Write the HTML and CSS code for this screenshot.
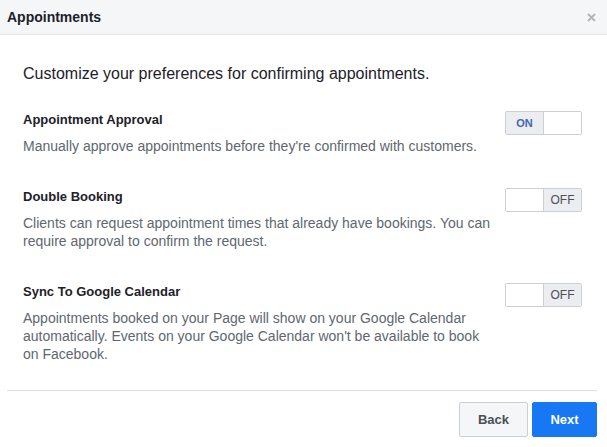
FILE: index.html
```html
<!DOCTYPE html>
<html>
<head>
<meta charset="utf-8">
<link rel="stylesheet" href="styles.css">
</head>
<body>
<div class="dialog">
  <div class="header">
    <span class="title">Appointments</span>
    <svg class="close" width="9" height="9" viewBox="0 0 9 9"><path d="M1 1L8 8M8 1L1 8" stroke="#b0b4bb" stroke-width="1.8"/></svg>
  </div>
  <div class="body">
    <p class="intro">Customize your preferences for confirming appointments.</p>
    <div class="setting">
      <div class="text">
        <div class="name">Appointment Approval</div>
        <div class="desc">Manually approve appointments before they're confirmed with customers.</div>
      </div>
      <div class="toggle on"><span class="lbl">ON</span><span class="blank"></span></div>
    </div>
    <div class="setting">
      <div class="text">
        <div class="name">Double Booking</div>
        <div class="desc">Clients can request appointment times that already have bookings. You can require approval to confirm the request.</div>
      </div>
      <div class="toggle off"><span class="blank"></span><span class="lbl">OFF</span></div>
    </div>
    <div class="setting">
      <div class="text">
        <div class="name">Sync To Google Calendar</div>
        <div class="desc">Appointments booked on your Page will show on your Google Calendar automatically. Events on your Google Calendar won't be available to book on Facebook.</div>
      </div>
      <div class="toggle off"><span class="blank"></span><span class="lbl">OFF</span></div>
    </div>
  </div>
  <div class="footer">
    <button class="btn back">Back</button>
    <button class="btn next">Next</button>
  </div>
</div>
</body>
</html>
```
FILE: styles.css
```css
* { box-sizing: border-box; }
html, body { margin: 0; padding: 0; background: #fff; }
body { font-family: "Liberation Sans", Arial, sans-serif; color: #1d2129; width: 607px; height: 447px; overflow: hidden; }
.dialog { width: 607px; }
.header {
  height: 35px;
  background: #f5f6f7;
  border-bottom: 1px solid #e5e5e5;
  display: flex;
  align-items: center;
  justify-content: space-between;
  padding: 0 11px 0 7px;
}
.title { font-weight: bold; font-size: 14px; color: #1d2129; }
.close { display: block; }
.body { padding: 29px 25px 0 23px; }
.intro { margin: 0 0 28px; font-size: 16px; line-height: 20px; color: #1d2129; }
.setting { display: flex; align-items: flex-start; margin-bottom: 34px; }
.setting:last-child { margin-bottom: 0; }
.text { width: 471px; flex-shrink: 0; }
.name { font-weight: bold; font-size: 13px; line-height: 16px; color: #1d2129; margin-bottom: 9px; }
.desc { font-size: 14px; line-height: 18px; color: #606770; }
.toggle {
  margin-top: -1px;
  margin-left: 11px;
  flex-shrink: 0;
  width: 77px;
  height: 24px;
  border: 1px solid #ccd0d5;
  border-radius: 2px;
  display: flex;
  overflow: hidden;
}
.toggle .lbl {
  width: 38px;
  background: #ebedf0;
  display: flex;
  align-items: center;
  justify-content: center;
  font-size: 11px;
  font-weight: bold;
}
.toggle .blank { flex: 1; background: #fff; }
.toggle.on .lbl { color: #4267b2; border-right: 1px solid #ccd0d5; }
.toggle.off .lbl { color: #4b4f56; font-weight: normal; font-size: 12px; border-left: 1px solid #ccd0d5; }
.footer {
  margin: 27px 10px 0 7px;
  border-top: 1px solid #dddfe2;
  padding-top: 11px;
  display: flex;
  justify-content: flex-end;
  gap: 4px;
}
.btn {
  height: 35px;
  font-family: "Liberation Sans", Arial, sans-serif;
  font-size: 13px;
  font-weight: bold;
  border-radius: 2px;
  padding: 0;
}
.back { width: 69px; background: #f5f6f7; border: 1px solid #ccd0d5; color: #4b4f56; }
.next { width: 65px; background: #1877f2; border: 1px solid #1877f2; color: #fff; }
```
